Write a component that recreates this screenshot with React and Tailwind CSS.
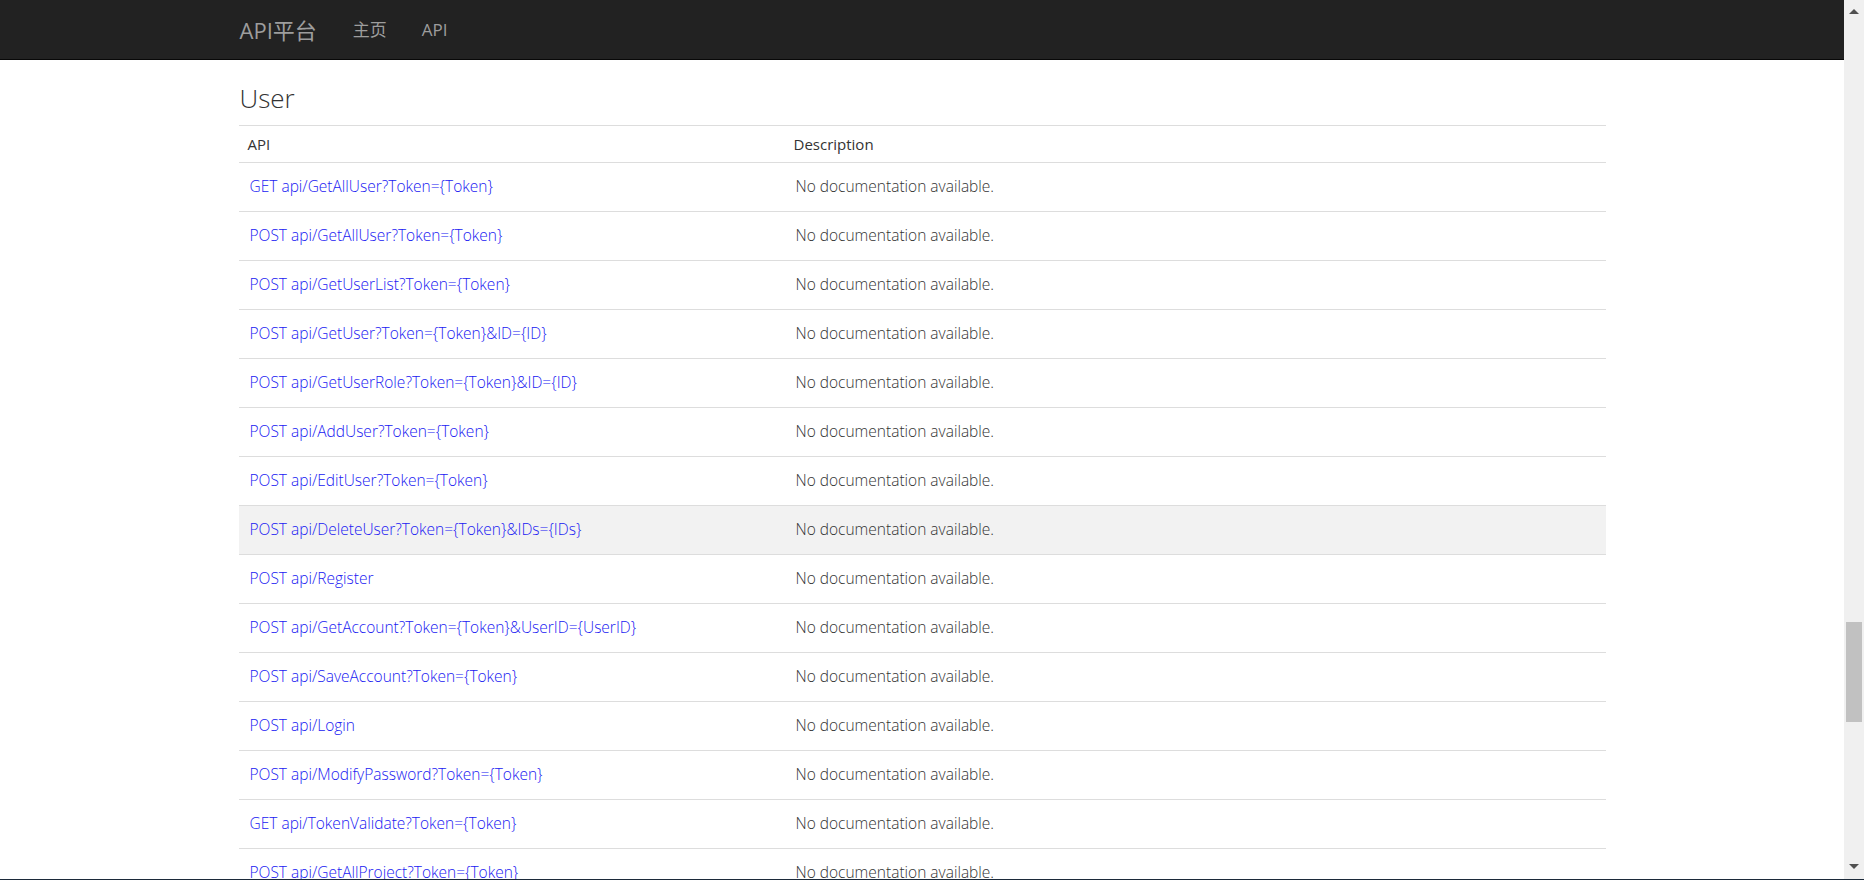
import React from "react";

const rows = [
  "GET api/GetAllUser?Token={Token}",
  "POST api/GetAllUser?Token={Token}",
  "POST api/GetUserList?Token={Token}",
  "POST api/GetUser?Token={Token}&ID={ID}",
  "POST api/GetUserRole?Token={Token}&ID={ID}",
  "POST api/AddUser?Token={Token}",
  "POST api/EditUser?Token={Token}",
  "POST api/DeleteUser?Token={Token}&IDs={IDs}",
  "POST api/Register",
  "POST api/GetAccount?Token={Token}&UserID={UserID}",
  "POST api/SaveAccount?Token={Token}",
  "POST api/Login",
  "POST api/ModifyPassword?Token={Token}",
  "GET api/TokenValidate?Token={Token}",
  "POST api/GetAllProject?Token={Token}",
];

export default function App() {
  return (
    <div
      className="relative flex h-[880px] w-[1864px] overflow-hidden bg-white"
      style={{ fontFamily: '"Open Sans", "Noto Sans CJK SC", sans-serif' }}
    >
      <div className="flex min-w-0 flex-1 flex-col">
        <nav className="h-[60px] shrink-0 border-b border-[#080808] bg-[#222222]">
          <div className="mx-auto flex h-full w-[1367px] items-center">
            <a className="ml-[1px] text-[22px] leading-none text-[#9d9d9d]">API平台</a>
            <a className="ml-[36px] text-[17px] leading-none text-[#9d9d9d]">主页</a>
            <a className="ml-[35px] text-[17px] leading-none text-[#9d9d9d]">API</a>
          </div>
        </nav>
        <main className="mx-auto w-[1367px]">
          <h2 className="mt-[22px] mb-[11px] ml-[1px] text-[26px] font-light leading-[32px] text-[#333]">
            User
          </h2>
          <div className="text-[15.5px] text-[#333]">
            <div className="grid h-[37px] grid-cols-[547px_1fr] items-center border-t border-[#dddddd] text-[15px] font-medium">
              <div className="px-[9px]">API</div>
              <div className="px-[8px]">Description</div>
            </div>
            {rows.map((r, i) => (
              <div
                key={i}
                className={
                  "grid h-[49px] grid-cols-[547px_1fr] items-center border-t border-[#dddddd] font-light " +
                  (i === 7 ? "bg-[#f2f2f2]" : "")
                }
              >
                <div className="px-[11px]">
                  <a className="text-[#2020f2]">{r}</a>
                </div>
                <div className="px-[10px] text-[#333]">No documentation available.</div>
              </div>
            ))}
          </div>
        </main>
      </div>
      <div className="relative flex h-full w-[20px] shrink-0 flex-col items-center bg-[#f0f0f0]">
        <svg width="12" height="20" viewBox="0 0 12 20" className="mt-[1px]">
          <path d="M1 13 L6 8 L11 13 Z" fill="#505050" />
        </svg>
        <div className="mt-[601px] h-[100px] w-[16px] bg-[#c1c1c1]" />
        <div className="flex-1" />
        <svg width="12" height="20" viewBox="0 0 12 20" className="mb-[3px]">
          <path d="M1 7 L6 12 L11 7 Z" fill="#505050" />
        </svg>
      </div>
      <div className="absolute bottom-0 left-0 h-[1px] w-full bg-[#1c2a3a]" />
    </div>
  );
}
